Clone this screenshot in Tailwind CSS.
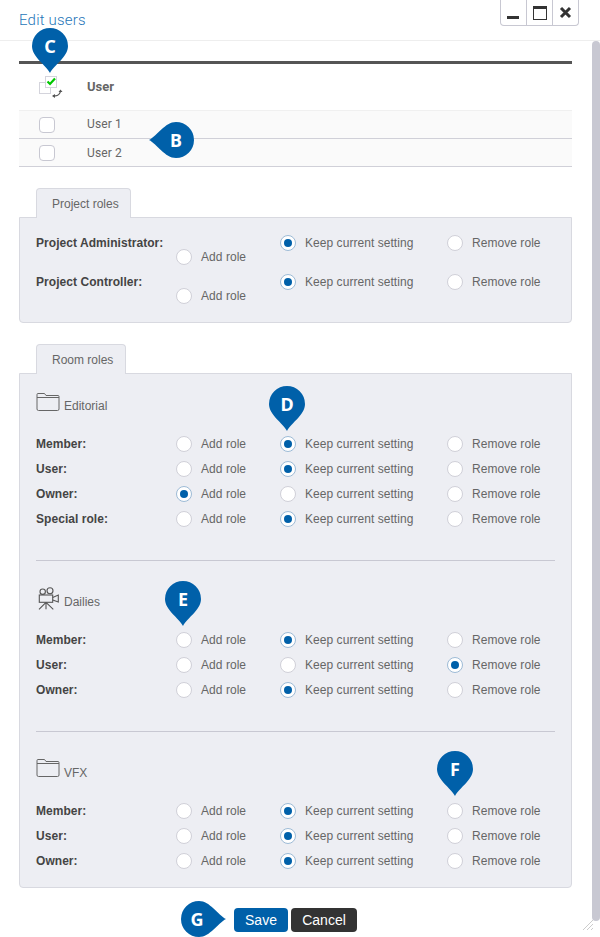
<!DOCTYPE html>
<html lang="en">
<head>
  <meta charset="UTF-8" />
  <title>Edit users</title>
  <script src="https://cdn.jsdelivr.net/npm/@tailwindcss/browser@4"></script>
</head>
<body class="bg-white relative w-[600px] h-[937px] overflow-hidden font-['Liberation_Sans',sans-serif] text-xs text-[#666]">
  <!-- Title bar -->
  <div class="h-[41px] border-b border-[#eeeeee] pl-[19px] pt-[10px] font-['Roboto',sans-serif] font-light text-[15px] tracking-[0.2px] leading-[20px] text-[#1f76b8]">Edit users</div>

  <!-- Window buttons -->
  <div class="absolute left-[500px] top-0 w-[79px] h-[26px] flex bg-white border border-t-0 border-[#c8c8d2] rounded-b-sm">
    <div class="w-[26px] border-r border-[#c8c8d2] flex justify-center"><div class="w-3 h-[3px] mt-[16px] -ml-px bg-[#333]"></div></div>
    <div class="w-[26px] border-r border-[#c8c8d2] flex justify-center"><div class="w-[14px] h-[14px] mt-[6px] border border-t-[3px] border-[#333]"></div></div>
    <div class="flex-1 flex justify-center">
      <svg class="mt-[6px]" width="13" height="13" viewBox="0 0 13 13"><path d="M2 2l9 9M11 2l-9 9" stroke="#333" stroke-width="3"/></svg>
    </div>
  </div>

  <!-- Scrollbar + resize grip -->
  <div class="absolute left-[592px] top-[41px] w-2 h-[880px] bg-[#c8c8d2] rounded-t-sm rounded-b-sm"></div>
  <svg class="absolute left-[582px] top-[919px]" width="12" height="12" viewBox="0 0 12 12"><path d="M1 11l10-10M5 11l6-6M9 11l2-2" stroke="#ccc" stroke-width="1"/></svg>

  <div class="pl-[19px] pr-[28px]">
    <!-- Users table -->
    <div class="mt-5 border-t-[3px] border-[#555]">
      <div class="h-[47px] flex items-center border-b border-[#f0f0f0]">
        <svg class="ml-[20px]" width="24" height="26" viewBox="0 0 24 26">
          <rect x="0.5" y="8.500" width="11" height="11" fill="#fff" stroke="#d4d4dc"/>
          <rect x="6.5" y="2.500" width="11" height="11" fill="#fff" stroke="#d4d4dc"/>
          <path d="M8.500 7.500l2.500 2.500 5-5.500" fill="none" stroke="#00c800" stroke-width="2.200"/>
          <path d="M14 21.500c3.500 1 6.500-.5 7.500-4" fill="none" stroke="#555" stroke-width="1.200"/>
          <path d="M19.500 18l2-2.500 2 2.500zM16 20v4l-3-2z" fill="#555"/>
        </svg>
        <div class="ml-[24px] font-['Roboto',sans-serif] font-bold text-[13px] text-[#666]">User</div>
      </div>
      <div class="h-[28px] flex items-center bg-[#fafafa] border-b border-[#d0d0d8]">
        <div class="ml-[20px] w-4 h-4 bg-white border border-[#c8c8d2] rounded-sm"></div>
        <div class="ml-[32px] -mt-[2px] font-['Roboto',sans-serif] tracking-[0.1px] text-[#666]">User 1</div>
      </div>
      <div class="h-[28px] flex items-center bg-[#fafafa] border-b border-[#d0d0d8]">
        <div class="ml-[20px] w-4 h-4 bg-white border border-[#c8c8d2] rounded-sm"></div>
        <div class="ml-[32px] font-['Roboto',sans-serif] tracking-[0.1px] text-[#666]">User 2</div>
      </div>
    </div>

    <!-- Project roles -->
    <div class="mt-[21px] ml-[17px] w-[95px] h-[30px] -mb-px relative z-10 bg-[#edeef3] border border-b-0 border-[#d8d9e0] rounded-t-sm pl-[15px] leading-[31px]">Project roles</div>
    <div class="h-[106px] bg-[#edeef3] border border-[#d8d9e0] rounded-b-sm pl-4 pt-[18px]" id="project"></div>

    <!-- Room roles -->
    <div class="mt-[21px] ml-[17px] w-[90px] h-[30px] -mb-px relative z-10 bg-[#edeef3] border border-b-0 border-[#d8d9e0] rounded-t-sm pl-[15px] leading-[31px]">Room roles</div>
    <div class="h-[515px] bg-[#edeef3] border border-[#d8d9e0] rounded-b-sm px-4">
      <div class="h-[50px] pt-[19px] flex items-start">
        <svg width="24" height="20" viewBox="0 0 24 20" class="-mt-[1px]"><path d="M1 17V2.500Q1 1.500 2 1.500H8.500L10 3.500H22Q23 3.500 23 4.500V17Q23 18.500 21.500 18.500H2.500Q1 18.500 1 17ZM1 5.500H23" fill="none" stroke="#666" stroke-width="1"/></svg>
        <div class="ml-[4px] mt-[6px] leading-[14px]">Editorial</div>
      </div>
      <div id="editorial" class="h-[137px] pt-[7px] border-b border-[#c8c8d2]"></div>

      <div class="h-[66px] pt-[25px] flex items-start">
        <svg width="24" height="24" viewBox="0 0 24 24">
          <g fill="none" stroke="#555" stroke-width="1.100">
            <circle cx="6.700" cy="5.700" r="2.700"/><circle cx="14" cy="4.700" r="3"/>
            <rect x="3.300" y="9" width="13.400" height="7.300"/><path d="M16.700 11.500l5.600-2.500v7l-5.600-2M10 16.300L3 23.300M10 16.300v7M10 16.300l7.300 7"/>
          </g>
        </svg>
        <div class="ml-[4px] mt-[9px] leading-[14px]">Dailies</div>
      </div>
      <div id="dailies" class="h-[105px] border-b border-[#c8c8d2]"></div>

      <div class="h-[66px] pt-[26px] flex items-start">
        <svg width="24" height="20" viewBox="0 0 24 20"><path d="M1 17V2.500Q1 1.500 2 1.500H8.500L10 3.500H22Q23 3.500 23 4.500V17Q23 18.500 21.500 18.500H2.500Q1 18.500 1 17ZM1 5.500H23" fill="none" stroke="#666" stroke-width="1"/></svg>
        <div class="ml-[4px] mt-[8px] leading-[14px]">VFX</div>
      </div>
      <div id="vfx"></div>
    </div>

    <!-- Footer buttons -->
    <div class="mt-5 pl-[215px] flex gap-[3px] font-['Liberation_Sans',sans-serif] text-sm">
      <div class="w-[54px] h-6 bg-[#0060a9] text-white rounded-sm text-center leading-6">Save</div>
      <div class="w-[66px] h-6 bg-[#333] text-white rounded-sm text-center leading-6">Cancel</div>
    </div>
  </div>

  <!-- Callout markers -->
  <div class="absolute left-[32px] top-[28px] w-9 h-[45px]">
    <svg class="absolute inset-0" width="36" height="45" viewBox="0 0 36 45"><path d="M18 45C14 37 0 29 0 18A18 18 0 0 1 36 18C36 29 22 37 18 45Z" fill="#0060a9"/></svg>
    <div class="relative text-center text-white font-['Noto_Sans',sans-serif] font-bold text-lg leading-[36px]">C</div>
  </div>
  <div class="absolute left-[269px] top-[386px] w-9 h-[45px]">
    <svg class="absolute inset-0" width="36" height="45" viewBox="0 0 36 45"><path d="M18 45C14 37 0 29 0 18A18 18 0 0 1 36 18C36 29 22 37 18 45Z" fill="#0060a9"/></svg>
    <div class="relative text-center text-white font-['Noto_Sans',sans-serif] font-bold text-lg leading-[36px]">D</div>
  </div>
  <div class="absolute left-[165px] top-[581px] w-9 h-[45px]">
    <svg class="absolute inset-0" width="36" height="45" viewBox="0 0 36 45"><path d="M18 45C14 37 0 29 0 18A18 18 0 0 1 36 18C36 29 22 37 18 45Z" fill="#0060a9"/></svg>
    <div class="relative text-center text-white font-['Noto_Sans',sans-serif] font-bold text-lg leading-[36px]">E</div>
  </div>
  <div class="absolute left-[437px] top-[751px] w-9 h-[45px]">
    <svg class="absolute inset-0" width="36" height="45" viewBox="0 0 36 45"><path d="M18 45C14 37 0 29 0 18A18 18 0 0 1 36 18C36 29 22 37 18 45Z" fill="#0060a9"/></svg>
    <div class="relative text-center text-white font-['Noto_Sans',sans-serif] font-bold text-lg leading-[36px]">F</div>
  </div>
  <!-- B points left, G points right -->
  <div class="absolute left-[149px] top-[122px] w-[45px] h-9">
    <svg class="absolute inset-0" width="45" height="36" viewBox="0 0 45 36"><path d="M0 18C8 14 16 0 27 0A18 18 0 0 1 27 36C16 36 8 22 0 18Z" fill="#0060a9"/></svg>
    <div class="relative pl-[9px] text-center text-white font-['Noto_Sans',sans-serif] font-bold text-lg leading-[36px]">B</div>
  </div>
  <div class="absolute left-[181px] top-[901px] w-[45px] h-9">
    <svg class="absolute inset-0" width="45" height="36" viewBox="0 0 45 36"><path d="M45 18C37 14 29 0 18 0A18 18 0 0 0 18 36C29 36 37 22 45 18Z" fill="#0060a9"/></svg>
    <div class="relative pr-[13px] text-center text-white font-['Noto_Sans',sans-serif] font-bold text-lg leading-[36px]">G</div>
  </div>

  <script>
    const rowCls = "grid grid-cols-[140px_104px_167px_1fr] h-[25px] items-center";
    const radio = on => on
      ? '<span class="w-4 h-4 rounded-full bg-white border border-[#9dbbd6] flex items-center justify-center shrink-0"><span class="w-2 h-2 rounded-full bg-[#0060a9]"></span></span>'
      : '<span class="w-4 h-4 rounded-full bg-white border border-[#d0d0d8] shrink-0"></span>';

    // which = 0 add, 1 keep, 2 remove
    function roleRow(label, which) {
      const opt = (text, i) => `<div class="flex items-center gap-[9px] tracking-[0.05px]">${radio(which === i)}<span>${text}</span></div>`;
      return `<div class="${rowCls}"><div class="font-bold text-[#444] tracking-[0.05px]">${label}</div>` +
        opt("Add role", 0) + opt("Keep current setting", 1) + opt("Remove role", 2) + `</div>`;
    }
    function projectRow(label) {
      return `<div class="grid grid-cols-[140px_104px_167px_1fr] h-[39px] items-start">` +
        `<div class="font-bold text-[#444] leading-4 -mt-px tracking-[0.05px]">${label}</div>` +
        `<div class="flex items-center gap-[9px] mt-[13px] tracking-[0.05px]">${radio(false)}<span>Add role</span></div>` +
        `<div class="flex items-center gap-[9px] -mt-px tracking-[0.05px]">${radio(true)}<span>Keep current setting</span></div>` +
        `<div class="flex items-center gap-[9px] -mt-px tracking-[0.05px]">${radio(false)}<span>Remove role</span></div></div>`;
    }

    document.getElementById("project").innerHTML = projectRow("Project Administrator:") + projectRow("Project Controller:");
    document.getElementById("editorial").innerHTML = [["Member:",1],["User:",1],["Owner:",0],["Special role:",1]].map(r => roleRow(r[0], r[1])).join("");
    document.getElementById("dailies").innerHTML = [["Member:",1],["User:",2],["Owner:",1]].map(r => roleRow(r[0], r[1])).join("");
    document.getElementById("vfx").innerHTML = [["Member:",1],["User:",1],["Owner:",1]].map(r => roleRow(r[0], r[1])).join("");
  </script>
</body>
</html>
